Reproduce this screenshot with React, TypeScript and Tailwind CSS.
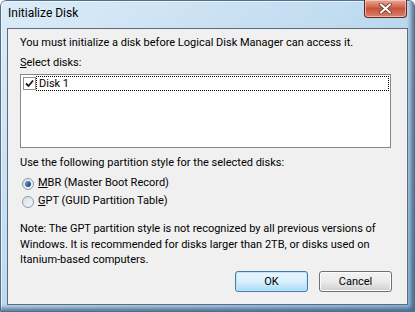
import React from "react";

const font = { fontFamily: 'Roboto, "Liberation Sans", sans-serif' };

const CloseButton = () => (
  <div className="absolute right-[8px] top-0 flex h-[18px] w-[43px] items-center justify-center rounded-b-[4px] border border-t-0 border-[#5a2a22] bg-gradient-to-b from-[#e9a99a] via-[#c9543c] to-[#d8806b] shadow-[inset_0_0_0_1px_rgba(255,220,210,0.6)]">
    <svg width="13" height="11" viewBox="0 0 13 11">
      <path d="M2 1.5 L11 9.5 M11 1.5 L2 9.5" stroke="#5a2a22" strokeWidth="3.6" strokeLinecap="round" />
      <path d="M2 1.5 L11 9.5 M11 1.5 L2 9.5" stroke="#ffffff" strokeWidth="2.2" strokeLinecap="round" />
    </svg>
  </div>
);

const Radio = ({ checked }: { checked?: boolean }) => (
  <span className="inline-flex h-[12px] w-[12px] shrink-0 items-center justify-center rounded-full border border-[#8c9bab] bg-gradient-to-br from-[#d5dfe9] to-[#f6f8fa]">
    {checked && (
      <span className="h-[6px] w-[6px] rounded-full bg-gradient-to-br from-[#6a9fd6] to-[#0e3c6e]" />
    )}
  </span>
);

const Button = ({ label, primary }: { label: string; primary?: boolean }) => (
  <button
    className={`h-[21px] w-[73px] rounded-[3px] border text-[11px] leading-none text-black ${
      primary
        ? "border-[#3c7fb1] bg-gradient-to-b from-[#eaf6fd] via-[#d9f0fc] to-[#a7d9f5] shadow-[inset_0_0_0_1px_#c0e4f8]"
        : "border-[#707070] bg-gradient-to-b from-[#f2f2f2] via-[#ebebeb] to-[#cfcfcf] shadow-[inset_0_0_0_1px_#fcfcfc]"
    }`}
  >
    {label}
  </button>
);

export default function App() {
  return (
    <div
      className="relative h-[312px] w-[415px] overflow-hidden rounded-t-[6px] bg-gradient-to-br from-[#dcecf8] via-[#bdd9ef] to-[#8fb7db] px-[7px] pt-[28px] pb-[7px] text-[11px] text-black"
      style={font}
    >
      <div className="pointer-events-none absolute inset-0 rounded-t-[6px] border border-[#4f6f8f] shadow-[inset_-3px_-3px_4px_rgba(10,40,75,0.55),inset_1px_1px_0_rgba(255,255,255,0.8)]" />
      <div className="absolute left-[8px] top-[6px] text-[12px] leading-[15px] text-black">Initialize Disk</div>
      <CloseButton />

      <div className="relative flex h-full flex-col border border-[#5d6b7a] bg-[#f0f0f0] px-[12px]">
        <p className="mt-[6px] whitespace-nowrap leading-[15px]">
          You must initialize a disk before Logical Disk Manager can access it.
        </p>
        <p className="mt-[5px] leading-[15px]">
          <span className="underline">S</span>elect disks:
        </p>
        <div className="mt-[4px] h-[74px] w-[371px] border border-[#828790] bg-white p-[1px]">
          <div className="flex h-[15px] items-center">
            <span className="ml-[1px] flex h-[13px] w-[13px] items-center justify-center border border-[#8e8f8f] bg-white">
              <svg width="9" height="9" viewBox="0 0 9 9">
                <path d="M1 4.5 L3.5 7 L8 1.5" fill="none" stroke="#1b1b1b" strokeWidth="1.8" />
              </svg>
            </span>
            <span className="ml-[0px] flex h-[15px] flex-1 items-center border border-dotted border-black pl-[2px] leading-none">
              Disk 1
            </span>
          </div>
        </div>

        <p className="mt-[7px] leading-[15px]">
          Use the following partition style for the selected disks:
        </p>
        <div className="mt-[6px] flex flex-col gap-[3px] pl-[2px]">
          <label className="flex h-[15px] items-center gap-[4px]">
            <Radio checked />
            <span>
              <span className="underline">M</span>BR (Master Boot Record)
            </span>
          </label>
          <label className="flex h-[15px] items-center gap-[4px]">
            <Radio />
            <span>
              <span className="underline">G</span>PT (GUID Partition Table)
            </span>
          </label>
        </div>

        <p className="mt-[12px] whitespace-nowrap leading-[15.5px]">
          Note: The GPT partition style is not recognized by all previous versions of
          <br />
          Windows. It is recommended for disks larger than 2TB, or disks used on
          <br />
          Itanium-based computers.
        </p>

        <div className="mt-auto mb-[12px] flex justify-end gap-[11px] pr-[3px]">
          <Button label="OK" primary />
          <Button label="Cancel" />
        </div>
      </div>
    </div>
  );
}
